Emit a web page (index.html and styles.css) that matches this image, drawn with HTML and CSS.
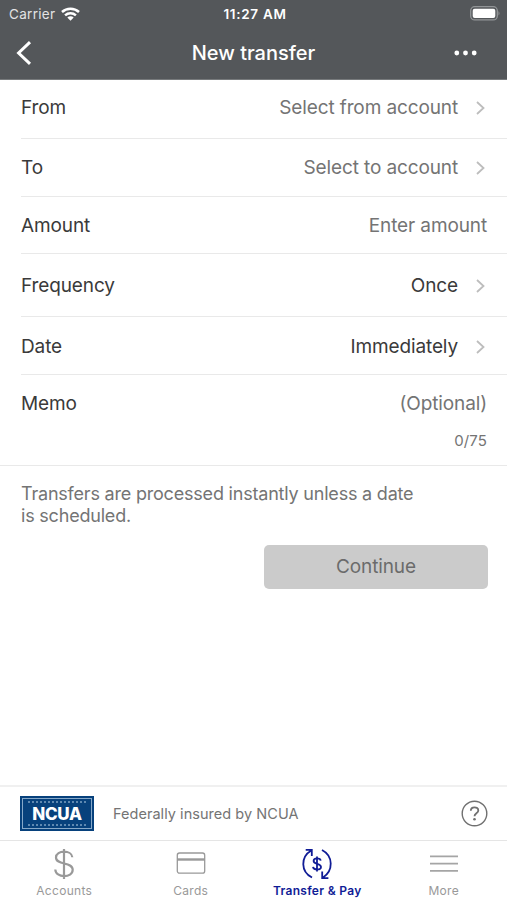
FILE: index.html
```html
<!DOCTYPE html>
<html lang="en">
<head>
<meta charset="utf-8">
<title>New transfer</title>
<link rel="stylesheet" href="styles.css">
</head>
<body>
<div class="app">
  <header class="top">
    <div class="status">
      <div class="carrier"><span>Carrier</span>
        <svg width="19" height="14" viewBox="0 0 19 14" fill="none" stroke="#fff" stroke-width="2.500"><path d="M1 5C5.700.700 13.300.700 18 5"/><path d="M4.100 8.300C7.100 5.500 11.900 5.500 14.900 8.300"/><path d="M9.500 13.700 6.300 10.500C8.100 8.900 10.900 8.900 12.700 10.500Z" fill="#fff" stroke="none"/></svg>
      </div>
      <span class="clock">11:27 AM</span>
      <svg class="battery" width="31" height="15" viewBox="0 0 31 15"><rect x=".700" y=".700" width="26.600" height="13.200" rx="4" fill="none" stroke="#929597" stroke-width="1.300"/><rect x="2.700" y="2.700" width="22.600" height="9.200" rx="2" fill="#fff"/><path d="M28.500 5Q30.500 7.300 28.500 9.600Z" fill="#929597"/></svg>
    </div>
    <nav class="nav">
      <svg width="16" height="26" viewBox="0 0 16 26" fill="none" stroke="#fff" stroke-width="3"><path d="M14 2.200 2.600 13 14 23.800"/></svg>
      <h1>New transfer</h1>
      <svg class="dots" width="23" height="6" viewBox="0 0 23 6" fill="#fff"><circle cx="2.800" cy="3" r="2.400"/><circle cx="11.500" cy="3" r="2.400"/><circle cx="20.200" cy="3" r="2.400"/></svg>
    </nav>
  </header>
  <main>
    <div class="row from"><span>From</span><span class="value hint">Select from account</span><svg class="chev" viewBox="0 0 9 14"><path d="M1 1 7.500 7 1 13"/></svg></div>
    <div class="row to"><span>To</span><span class="value hint">Select to account</span><svg class="chev" viewBox="0 0 9 14"><path d="M1 1 7.500 7 1 13"/></svg></div>
    <div class="row amount"><span>Amount</span><span class="value hint">Enter amount</span></div>
    <div class="row frequency"><span>Frequency</span><span class="value">Once</span><svg class="chev" viewBox="0 0 9 14"><path d="M1 1 7.500 7 1 13"/></svg></div>
    <div class="row date"><span>Date</span><span class="value">Immediately</span><svg class="chev" viewBox="0 0 9 14"><path d="M1 1 7.500 7 1 13"/></svg></div>
    <div class="memo">
      <div class="line"><span>Memo</span><span class="value hint">(Optional)</span></div>
      <div class="count">0/75</div>
    </div>
    <p class="note">Transfers are processed instantly unless a date<br>is scheduled.</p>
    <button class="continue">Continue</button>
  </main>
  <section class="insured">
    <div class="ncua"><div class="frame"><i></i><b>NCUA</b><i></i></div></div>
    <span>Federally insured by NCUA</span>
    <svg width="27" height="27" viewBox="0 0 27 27" fill="none" stroke="#707070" stroke-width="1.400"><circle cx="13.500" cy="13.500" r="12.300"/><path d="M9.800 10.700C9.800 6.200 17.300 6.200 17.300 10.500C17.300 13.300 13.500 13.300 13.500 16.200" stroke-width="1.800"/><circle cx="13.500" cy="19.300" r="1.300" fill="#707070" stroke="none"/></svg>
  </section>
  <footer class="tabs">
    <div class="tab"><svg width="32" height="32" viewBox="0 0 32 32" fill="none" stroke="#999" stroke-width="2.200"><path d="M16 1V31M24.300 9.200C24 1.900 8 1.700 8 9.400C8 17.500 24.700 13.500 24.700 21.800C24.700 30.300 7.500 30.300 7.300 21.500"/></svg><span>Accounts</span></div>
    <div class="tab"><svg width="32" height="32" viewBox="0 0 32 32" fill="none" stroke="#999" stroke-width="1.300"><rect x="2.300" y="5" width="27.400" height="20.200" rx="2.200"/><path d="M2 11.500H30" stroke-width="2.400"/></svg><span>Cards</span></div>
    <div class="tab active"><svg width="32" height="32" viewBox="0 0 32 32" fill="none" stroke="#101c96" stroke-width="1.800"><path d="M11 29.500C-.500 23.500-.500 9 10.200 2.500M4.700 1.900H10.800V8M21 2C32.500 8 32.500 23 21.800 29.700M21.200 23.500V30.200H27.400"/><path d="M16 8.500V23.500M19.700 12.600C19 9.600 12.600 9.800 12.600 12.900C12.600 16.600 20 15 20 18.900C20 22.300 12.400 22.300 12 18.900"/></svg><span>Transfer &amp; Pay</span></div>
    <div class="tab"><svg width="32" height="32" viewBox="0 0 32 32" stroke="#a5a5a5" stroke-width="1.800"><path d="M2 8.300H30M2 15.600H30M2 22.900H30"/></svg><span>More</span></div>
  </footer>
</div>
</body>
</html>
```
FILE: styles.css
```css
* { box-sizing: border-box; }
body { margin: 0; background: #fff; color: #3a3a3a; font: 19px/24px Inter, "Liberation Sans", sans-serif; letter-spacing: -.12px; }
.app { height: 900px; display: flex; flex-direction: column; overflow: hidden; }
.top { height: 80px; flex: none; background: #54575a; color: #fff; border-bottom: 1px solid #777a7c; }
.status { height: 27px; padding: 0 6px 0 9px; display: grid; grid-template-columns: 1fr auto 1fr; align-items: center; }
.carrier { display: flex; align-items: center; gap: 6px; color: #e2e3e4; font-size: 13.500px; letter-spacing: .3px; }
.clock { font-weight: 600; font-size: 13.500px; letter-spacing: .7px; }
.battery { justify-self: end; }
.nav { height: 51px; padding: 0 30px 0 16px; display: grid; grid-template-columns: 30px 1fr 16px; align-items: center; }
.dots { justify-self: end; }
h1 { margin: 0; text-align: center; font-size: 20px; font-weight: 500; letter-spacing: 0; }
main { flex: 1; }
.row { margin-left: 21px; padding-right: 20px; padding-top: 1px; display: flex; align-items: center; border-bottom: 1px solid #e9e9e9; }
.value { margin-left: auto; }
.hint { color: #747474; }
.chev { width: 9px; height: 14px; margin-left: 18px; margin-right: 2px; fill: none; stroke: #bdbdbd; stroke-width: 1.800; }
.from { height: 59px; padding-bottom: 4px; }
.to { height: 58px; padding-top: 0; }
.amount { height: 57px; padding-top: 2px; }
.frequency { height: 63px; padding-top: 2px; }
.date { height: 58px; padding-top: 2px; }
.memo { height: 91px; padding: 17px 20px 0 21px; border-bottom: 1px solid #e9e9e9; }
.line { display: flex; }
.count { margin-top: 13px; text-align: right; font-size: 15px; letter-spacing: .1px; color: #747474; }
.note { margin: 17px 21px 0; font-size: 18px; line-height: 22px; letter-spacing: -.2px; color: #747474; }
.continue { display: block; width: 224px; height: 44px; margin: 18px 19px 0 auto; padding: 0; border: 0; border-radius: 5px; background: #cbcbcb; color: #6b6b6b; font: inherit; letter-spacing: -.12px; }
.insured { height: 55px; flex: none; padding: 0 19px 0 20px; display: flex; align-items: center; border-top: 2px solid #f0f0f0; font-size: 14.500px; letter-spacing: .04px; color: #747474; }
.insured span { margin-left: 19px; flex: 1; }
.ncua { width: 74px; height: 35px; padding: 2px; background: #07417c; }
.frame { height: 31px; border: 1px solid #86a8c8; display: flex; flex-direction: column; align-items: center; justify-content: space-between; padding: 2px 0; }
.frame b { color: #fff; font-size: 17px; line-height: 18px; font-weight: 800; letter-spacing: -.3px; }
.frame i { width: 58px; border-top: 2px dotted #5e88b0; }
.tabs { height: 60px; flex: none; border-top: 1px solid #e5e5e5; display: grid; grid-template-columns: repeat(4, 1fr); padding-left: 1px; }
.tab { display: flex; flex-direction: column; align-items: center; padding-top: 7px; color: #999; font-size: 12px; line-height: 16px; }
.tab span { margin-top: 3px; white-space: nowrap; letter-spacing: .3px; }
.active { color: #101c96; font-weight: 600; }
```
